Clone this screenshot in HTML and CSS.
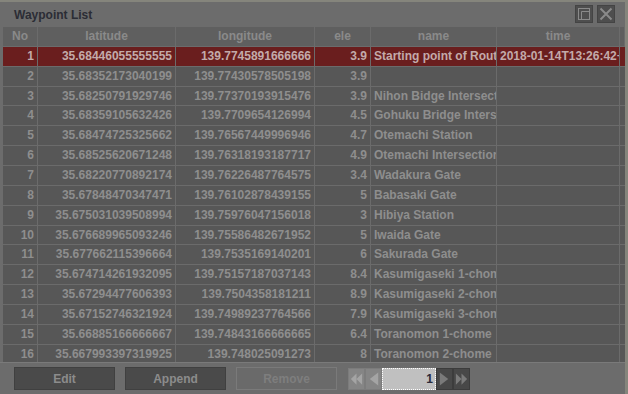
FILE: index.html
```html
<!DOCTYPE html>
<html>
<head>
<meta charset="utf-8">
<link rel="stylesheet" href="styles.css">
</head>
<body>
<div class="window">
  <div class="titlebar">
    <span class="title">Waypoint List</span>
    <div class="controls">
      <div class="ctl">
        <svg width="18" height="18" viewBox="0 0 18 18"><rect x="3.5" y="3.5" width="11" height="11" fill="none" stroke="#8a8a8a"/><path d="M6.5 14.5V6.5H14.5" fill="none" stroke="#8a8a8a"/></svg>
      </div>
      <div class="ctl">
        <svg width="18" height="18" viewBox="0 0 18 18"><path d="M3.5 3.5L14.5 14.5M14.5 3.5L3.5 14.5" stroke="#8a8a8a" stroke-width="2"/></svg>
      </div>
    </div>
  </div>
  <div class="gridwrap">
    <div class="grid">
      <div class="h">No</div><div class="h">latitude</div><div class="h">longitude</div><div class="h">ele</div><div class="h">name</div><div class="h">time</div><div class="h"></div>

      <div class="c r sel">1</div><div class="c r sel">35.68446055555555</div><div class="c r sel">139.7745891666666</div><div class="c r sel">3.9</div><div class="c sel">Starting point of Route</div><div class="c sel">2018-01-14T13:26:42+09:00</div><div class="c sel"></div>

      <div class="c r">2</div><div class="c r">35.68352173040199</div><div class="c r">139.77430578505198</div><div class="c r">3.9</div><div class="c"></div><div class="c"></div><div class="c"></div>
      <div class="c r">3</div><div class="c r">35.68250791929746</div><div class="c r">139.77370193915476</div><div class="c r">3.9</div><div class="c">Nihon Bidge Intersection</div><div class="c"></div><div class="c"></div>
      <div class="c r">4</div><div class="c r">35.68359105632426</div><div class="c r">139.7709654126994</div><div class="c r">4.5</div><div class="c">Gohuku Bridge Intersection</div><div class="c"></div><div class="c"></div>
      <div class="c r">5</div><div class="c r">35.68474725325662</div><div class="c r">139.76567449996946</div><div class="c r">4.7</div><div class="c">Otemachi Station</div><div class="c"></div><div class="c"></div>
      <div class="c r">6</div><div class="c r">35.68525620671248</div><div class="c r">139.76318193187717</div><div class="c r">4.9</div><div class="c">Otemachi Intersection</div><div class="c"></div><div class="c"></div>
      <div class="c r">7</div><div class="c r">35.68220770892174</div><div class="c r">139.76226487764575</div><div class="c r">3.4</div><div class="c">Wadakura Gate</div><div class="c"></div><div class="c"></div>
      <div class="c r">8</div><div class="c r">35.67848470347471</div><div class="c r">139.76102878439155</div><div class="c r">5</div><div class="c">Babasaki Gate</div><div class="c"></div><div class="c"></div>
      <div class="c r">9</div><div class="c r">35.675031039508994</div><div class="c r">139.75976047156018</div><div class="c r">3</div><div class="c">Hibiya Station</div><div class="c"></div><div class="c"></div>
      <div class="c r">10</div><div class="c r">35.676689965093246</div><div class="c r">139.75586482671952</div><div class="c r">5</div><div class="c">Iwaida Gate</div><div class="c"></div><div class="c"></div>
      <div class="c r">11</div><div class="c r">35.677662115396664</div><div class="c r">139.7535169140201</div><div class="c r">6</div><div class="c">Sakurada Gate</div><div class="c"></div><div class="c"></div>
      <div class="c r">12</div><div class="c r">35.674714261932095</div><div class="c r">139.75157187037143</div><div class="c r">8.4</div><div class="c">Kasumigaseki 1-chome</div><div class="c"></div><div class="c"></div>
      <div class="c r">13</div><div class="c r">35.67294477606393</div><div class="c r">139.7504358181211</div><div class="c r">8.9</div><div class="c">Kasumigaseki 2-chome</div><div class="c"></div><div class="c"></div>
      <div class="c r">14</div><div class="c r">35.67152746321924</div><div class="c r">139.74989237764566</div><div class="c r">7.9</div><div class="c">Kasumigaseki 3-chome</div><div class="c"></div><div class="c"></div>
      <div class="c r">15</div><div class="c r">35.66885166666667</div><div class="c r">139.74843166666665</div><div class="c r">6.4</div><div class="c">Toranomon 1-chome</div><div class="c"></div><div class="c"></div>
      <div class="c r">16</div><div class="c r">35.667993397319925</div><div class="c r">139.748025091273</div><div class="c r">8</div><div class="c">Toranomon 2-chome</div><div class="c"></div><div class="c"></div>
    </div>
  </div>
  <div class="footer">
    <button class="btn">Edit</button>
    <button class="btn">Append</button>
    <button class="btn disabled">Remove</button>
    <div class="pager">
      <div class="pg light"><svg width="16" height="20" viewBox="0 0 16 20"><path d="M8 4L2 10L8 16ZM14 4L8 10L14 16Z" fill="#a4a4a4"/></svg></div>
      <div class="pg light"><svg width="16" height="20" viewBox="0 0 16 20"><path d="M13 3L4 10L13 17Z" fill="#a4a4a4"/></svg></div>
      <div class="pageinput">1</div>
      <div class="pg dark"><svg width="16" height="20" viewBox="0 0 16 20"><path d="M3 3L12 10L3 17Z" fill="#7a7a7a"/></svg></div>
      <div class="pg dark"><svg width="16" height="20" viewBox="0 0 16 20"><path d="M2 4L8 10L2 16ZM8 4L14 10L8 16Z" fill="#7a7a7a"/></svg></div>
    </div>
  </div>
</div>
</body>
</html>
```
FILE: styles.css
```css
html, body {
  margin: 0;
  padding: 0;
}
body {
  background: #85857c;
  font-family: "Liberation Sans", Arial, sans-serif;
  font-size: 12px;
  font-weight: bold;
  width: 628px;
  height: 394px;
  overflow: hidden;
}
.window {
  margin-top: 2px;
  width: 625px;
  height: 392px;
  background: #6c6c6c;
  display: flex;
  flex-direction: column;
}
.titlebar {
  height: 25px;
  display: flex;
  align-items: center;
  justify-content: space-between;
  padding: 0 10px 0 14px;
  box-sizing: border-box;
  flex: none;
}
.title {
  color: #2b2d35;
  font-size: 12px;
}
.controls {
  display: flex;
  gap: 4px;
  margin-top: -2px;
}
.ctl {
  width: 18px;
  height: 18px;
  background: #4e4e4e;
  box-shadow: inset 0 0 0 1px #444;
}
.ctl svg {
  display: block;
}
.gridwrap {
  height: 335px;
  overflow: hidden;
  flex: none;
  margin-left: 3px;
}
.grid {
  display: grid;
  grid-template-columns: 34px 137px 138px 55px 125px 122px 4px;
  grid-auto-rows: 18.87px;
  gap: 1px;
  background: #6b6b6b;
  width: 622px;
}
.h {
  background: #5f5f5f;
  color: #8a8a8a;
  text-align: center;
  line-height: 19px;
}
.c {
  background: #575757;
  color: #8e8e8e;
  line-height: 19px;
  padding: 0 3px;
  white-space: nowrap;
  overflow: hidden;
}
.c.r {
  text-align: right;
}
.c.sel {
  background: #6a1e1e;
  color: #c3aaaa;
}
.footer {
  flex: 1;
  border-top: 1px solid #7a7a7a;
  display: flex;
  align-items: center;
  padding: 0 0 0 14px;
  gap: 10px;
}
.btn {
  width: 101px;
  height: 23px;
  background: #4a4a4a;
  border: 1px solid #404040;
  color: #8c8c8c;
  font-family: "Liberation Sans", Arial, sans-serif;
  font-size: 12px;
  font-weight: bold;
  padding: 0;
}
.btn.disabled {
  background: #6a6a6a;
  border-color: #7a7a7a;
  color: #7e7e7e;
}
.pager {
  display: flex;
  height: 22px;
  margin-left: 1px;
}
.pg {
  width: 17px;
  height: 22px;
  display: flex;
  align-items: center;
  justify-content: center;
  box-sizing: border-box;
}
.pg.light {
  background: #858585;
  border: 1px solid #7c7c7c;
}
.pg.dark {
  background: #484848;
  border: 1px solid #3c3c3c;
}
.pageinput {
  width: 54px;
  height: 22px;
  box-sizing: border-box;
  background: #c0c0c0;
  border: 1px dotted #ffffff;
  color: #2a2a3a;
  text-align: right;
  line-height: 20px;
  padding-right: 2px;
}
```
